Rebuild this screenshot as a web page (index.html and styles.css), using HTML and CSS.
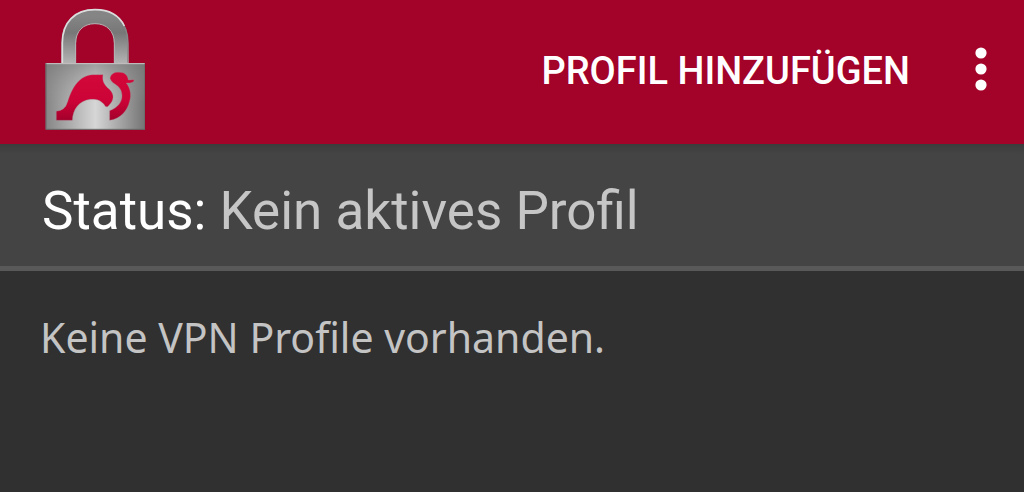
FILE: index.html
```html
<!DOCTYPE html>
<html lang="de">
<head>
<meta charset="utf-8">
<meta name="viewport" content="width=device-width, initial-scale=1">
<title>VPN Profile</title>
<link rel="stylesheet" href="styles.css">
</head>
<body>
<header class="app-bar">
  <svg class="logo" viewBox="30 21 300 372" role="img" aria-label="VPN">
    <defs>
      <linearGradient id="body" x1="0" y1="0" x2="1" y2="0">
        <stop offset="0" stop-color="#858585"/>
        <stop offset=".5" stop-color="#d6d6d6"/>
        <stop offset="1" stop-color="#747474"/>
      </linearGradient>
      <linearGradient id="shade" x1="0" y1="0" x2="0" y2="1">
        <stop offset="0" stop-color="#777" stop-opacity=".6"/>
        <stop offset=".6" stop-color="#999" stop-opacity="0"/>
      </linearGradient>
      <linearGradient id="shackle" x1="0" y1="0" x2="0" y2="1">
        <stop offset="0" stop-color="#858585"/>
        <stop offset=".35" stop-color="#777"/>
        <stop offset="1" stop-color="#b4b4b4"/>
      </linearGradient>
      <linearGradient id="bird" x1="0" y1="0" x2="0" y2="1">
        <stop offset="0" stop-color="#d3083a"/>
        <stop offset=".6" stop-color="#cb0336"/>
        <stop offset="1" stop-color="#a3002b"/>
      </linearGradient>
    </defs>
    <path d="M101 190V130C101 75 134 49 180 49S259 75 259 130V190" fill="none" stroke="url(#shackle)" stroke-width="44"/>
    <path d="M82 190V128C82 67 119 29 180 29C222 29 253 47 268 78" fill="none" stroke="#dcdcdc" stroke-width="5"/>
    <path d="M122 190V130C122 93 145 71 180 71S238 93 238 130V190" fill="none" stroke="#b4b4b4" stroke-width="3"/>
    <path d="M278 188V128C278 109 275 92 268 78" fill="none" stroke="#8b8b8b" stroke-width="3"/>
    <rect x="32" y="190" width="298" height="199" fill="url(#body)"/>
    <rect x="32" y="190" width="298" height="199" fill="url(#shade)"/>
    <path d="M32 191H330" stroke="#c9c9c9" stroke-width="3"/>
    <path d="M33 190V388H330V190" fill="none" stroke="#646464" stroke-width="3"/>
    <g fill="url(#bird)" stroke="#a88088" stroke-width="1" stroke-linejoin="round">
      <path d="M64 361V334Q91 331 98 305C112 260 134 226 173 224H204C201 244 207 253 223 268C239 284 238 301 220 318Q213 325 207 313C196 300 184 297 166 298C133 302 113 327 112 361Z"/>
      <path d="M225 235C228 221 239 216 252 217C269 216 278 226 280 240L297 239C298 246 288 250 274 249C286 265 290 285 284 303C277 333 257 356 224 361V332C248 324 262 306 261 286C260 265 249 258 235 249Q227 242 225 235Z"/>
    </g>
  </svg>
  <button class="add-profile" type="button">PROFIL HINZUFÜGEN</button>
  <button class="overflow" type="button" aria-label="Weitere Optionen">
    <svg class="dots" viewBox="0 0 12 44" aria-hidden="true">
      <circle cx="6" cy="6" r="5.6"/><circle cx="6" cy="22" r="5.6"/><circle cx="6" cy="38" r="5.6"/>
    </svg>
  </button>
</header>
<section class="status"><span class="status-label">Status:</span> Kein aktives Profil</section>
<main class="profiles">
  <p class="empty">Keine VPN Profile vorhanden.</p>
</main>
</body>
</html>
```
FILE: styles.css
```css
* {
  box-sizing: border-box;
}

body {
  margin: 0;
  min-height: 100vh;
  background: #303030;
  color: #c4c4c4;
  font-family: Roboto, "Liberation Sans", sans-serif;
}

.app-bar {
  display: flex;
  align-items: center;
  height: 144px;
  padding: 0 24px 6px 45px;
  background: #a30229;
}

.logo {
  width: 100px;
  height: 124px;
  margin-right: auto;
}

.add-profile,
.overflow {
  padding: 0;
  border: 0;
  background: none;
  color: #fff;
  font: inherit;
}

.add-profile {
  padding-top: 4px;
  font-size: 38px;
  font-weight: 500;
  line-height: 48px;
  white-space: nowrap;
}

.overflow {
  display: flex;
  justify-content: center;
  width: 38px;
  margin-left: 52px;
}

.dots {
  width: 12px;
  height: 44px;
  fill: #fff;
}

.status {
  padding: 35px 42px 23px;
  border-bottom: 5px solid #595959;
  background: linear-gradient(#3c3c3c, #444 10px);
  color: #c6c6c6;
  font-size: 53px;
  line-height: 64px;
}

.status-label {
  color: #fff;
}

.profiles {
  padding: 40px;
}

.empty {
  margin: 0;
  font-family: "Noto Sans", "Open Sans", sans-serif;
  font-size: 41px;
  line-height: 52px;
}
```
